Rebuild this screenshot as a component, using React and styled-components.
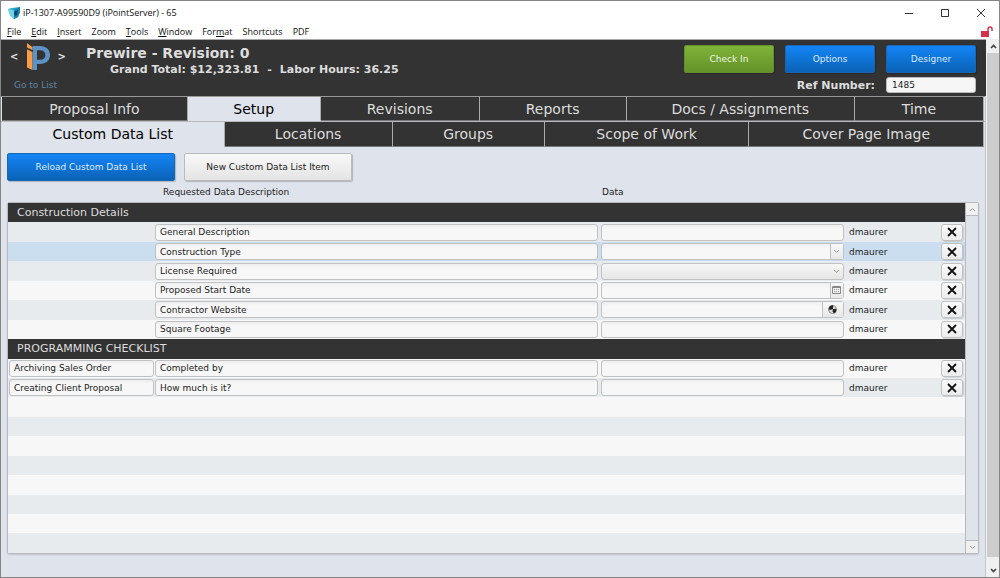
import React from 'react';
import styled, { createGlobalStyle, css } from 'styled-components';

const COLORS = {
  dark: '#333333',
  page: '#dfe3eb',
  light: '#dddddd',
  line: '#b6b9bd',
  odd: '#f7f7f7',
  even: '#e7ebee',
  active: '#cbdeef',
};

const MENUS = [
  ['', 'F', 'ile'],
  ['', 'E', 'dit'],
  ['', 'I', 'nsert'],
  ['Zoom', '', ''],
  ['', 'T', 'ools'],
  ['', 'W', 'indow'],
  ['For', 'm', 'at'],
  ['Shortcuts', '', ''],
  ['PDF', '', ''],
];

const MAIN_TABS = [
  { label: 'Proposal Info', weight: 186 },
  { label: 'Setup', weight: 133, active: true },
  { label: 'Revisions', weight: 159 },
  { label: 'Reports', weight: 147 },
  { label: 'Docs / Assignments', weight: 229 },
  { label: 'Time', weight: 129 },
];

const SUB_TABS = [
  { label: 'Custom Data List', weight: 223, active: true },
  { label: 'Locations', weight: 168 },
  { label: 'Groups', weight: 152 },
  { label: 'Scope of Work', weight: 205 },
  { label: 'Cover Page Image', weight: 235 },
];

const SECTIONS = [
  {
    title: 'Construction Details',
    rows: [
      { description: 'General Description', type: 'text' },
      { description: 'Construction Type', type: 'combo', active: true },
      { description: 'License Required', type: 'select' },
      { description: 'Proposed Start Date', type: 'date' },
      { description: 'Contractor Website', type: 'web' },
      { description: 'Square Footage', type: 'text' },
    ],
  },
  {
    title: 'PROGRAMMING CHECKLIST',
    rows: [
      { category: 'Archiving Sales Order', description: 'Completed by', type: 'text' },
      { category: 'Creating Client Proposal', description: 'How much is it?', type: 'text' },
    ],
  },
];

const EMPTY_ROWS = 8;

const AppIcon = () => (
  <svg width="12" height="12" viewBox="0 0 12 12" aria-hidden="true">
    <path d="M0 2 L4 1 L12 0 L12 5 L10 10 L6 12 L2 8 Z" fill="#25a5c6" />
    <path d="M0 2 L6 3 L6 12 L2 8 Z" fill="#6fd3e6" />
    <path d="M6 3 L12 0 L12 5 L10 10 L6 12 Z" fill="#1382ae" />
    <path d="M6 5 L10 3 L9 8 L7 9 Z" fill="#0a4468" />
  </svg>
);

const Logo = () => (
  <svg width="23" height="29" viewBox="0 0 23 29" aria-hidden="true">
    <path d="M0 1 L5.5 5.2 V8 L0 5.6 Z M0 7.2 L5.5 10 V28 L0 25.6 Z" fill="#fb9c45" />
    <path
      d="M5.5 4 H13 C19 4 23 7.6 23 13 C23 18.4 19 22 13 22 H10 V28 H5.5 V10 L6.5 8.5 L5.5 8 Z M10 8.3 V17.8 H13 C16.4 17.8 18.4 16 18.4 13 C18.4 10 16.4 8.3 13 8.3 Z"
      fill="#5c92c4"
      fillRule="evenodd"
    />
  </svg>
);

const Chevron = ({ up, bold }) => (
  <svg width="7" height="5" viewBox="0 0 7 5" aria-hidden="true">
    <path
      d={up ? 'M1 4 L3.5 1.5 L6 4' : 'M1 1 L3.5 3.5 L6 1'}
      fill="none"
      stroke="currentColor"
      strokeWidth={bold ? 1.7 : 1}
    />
  </svg>
);

const Cross = () => (
  <svg width="10" height="10" viewBox="0 0 10 10" aria-hidden="true">
    <path d="M1 1 L9 9 M9 1 L1 9" fill="none" stroke="#111" strokeWidth="1.8" />
  </svg>
);

const Calendar = () => (
  <svg width="9" height="8" viewBox="0 0 9 8" aria-hidden="true">
    <path d="M0.5 0.5 H8.5 V7.5 H0.5 Z M0 1.5 H9" fill="none" stroke="#888" />
    <path d="M2 3.5 H7.5 M2 5.5 H7.5" fill="none" stroke="#999" strokeDasharray="1 1" />
  </svg>
);

const Globe = () => (
  <svg width="9" height="9" viewBox="0 0 9 9" aria-hidden="true">
    <circle cx="4.5" cy="4.5" r="4" fill="#ddd" stroke="#888" />
    <path d="M2 1 L5 0 L5 4 L2 5 L0.5 4 Z M5 4 L8.5 4 Q8.5 7 6 8.5 L4.5 6.5 Z" fill="#222" />
  </svg>
);

const Lock = () => (
  <svg width="12" height="11" viewBox="0 0 12 11" aria-hidden="true">
    <path d="M0 5 H8 V11 H0 Z" fill="#d6304a" />
    <path d="M7 5 V3 Q7 1 9 1 Q11 1 11 3 V5" fill="none" stroke="#d6304a" strokeWidth="1.5" />
  </svg>
);

const DataCell = ({ row }) => {
  const label = `${row.description} data`;
  if (row.type === 'select') {
    return (
      <SelectWrap>
        <Select aria-label={label} />
        <Chevron />
      </SelectWrap>
    );
  }
  return (
    <FieldGroup>
      <Field aria-label={label} />
      {row.type === 'combo' && <Addon aria-label="Show values"><Chevron /></Addon>}
      {row.type === 'date' && <Addon aria-label="Pick a date"><Calendar /></Addon>}
      {row.type === 'web' && <Addon $wide aria-label="Open website"><Globe /></Addon>}
    </FieldGroup>
  );
};

const Section = ({ section }) => (
  <>
    <HeadingRow>
      <th colSpan="5" scope="colgroup">{section.title}</th>
    </HeadingRow>
    {section.rows.map((row) => (
      <Row key={row.description} $active={row.active}>
        <td>
          {row.category && (
            <FieldGroup $first>
              <Field aria-label="Category" defaultValue={row.category} />
            </FieldGroup>
          )}
        </td>
        <td>
          <FieldGroup>
            <Field aria-label="Requested data description" defaultValue={row.description} />
          </FieldGroup>
        </td>
        <td><DataCell row={row} /></td>
        <UserCell>dmaurer</UserCell>
        <td><DeleteButton aria-label="Delete item"><Cross /></DeleteButton></td>
      </Row>
    ))}
  </>
);

export default function App() {
  return (
    <Window>
      <GlobalStyle />
      <TitleBar>
        <AppIcon />
        <Title>iP-1307-A99590D9 (iPointServer) - 65</Title>
        <WindowButton aria-label="Minimize">
          <svg width="10" height="10"><path d="M1 5.5 H9" stroke="#333" /></svg>
        </WindowButton>
        <WindowButton aria-label="Maximize">
          <svg width="10" height="10"><path d="M1.5 1.5 H8.5 V8.5 H1.5 Z" fill="none" stroke="#333" /></svg>
        </WindowButton>
        <WindowButton aria-label="Close">
          <svg width="10" height="10"><path d="M1 1 L9 9 M9 1 L1 9" stroke="#333" /></svg>
        </WindowButton>
      </TitleBar>
      <MenuBar>
        {MENUS.map(([before, key, after]) => (
          <MenuItem key={before + key + after}>{before}<u>{key}</u>{after}</MenuItem>
        ))}
        <LockSlot><Lock /></LockSlot>
      </MenuBar>
      <Body>
        <Page>
          <Header>
            <Brand>
              <BrandRow>
                <Arrow aria-label="Previous">&lt;</Arrow>
                <Logo />
                <Arrow aria-label="Next">&gt;</Arrow>
              </BrandRow>
              <ListLink href="#list">Go to List</ListLink>
            </Brand>
            <Summary>
              <Heading>Prewire - Revision: 0</Heading>
              <Totals>
                <span>Grand Total: $12,323.81</span>
                <span>-</span>
                <span>Labor Hours: 36.25</span>
              </Totals>
            </Summary>
            <Actions>
              <ActionRow>
                <Button $tone="green">Check In</Button>
                <Button $tone="blue">Options</Button>
                <Button $tone="blue">Designer</Button>
              </ActionRow>
              <RefRow>
                <label htmlFor="ref">Ref Number:</label>
                <RefInput id="ref" defaultValue="1485" />
              </RefRow>
            </Actions>
          </Header>
          <Content>
            <Tabs>
              {MAIN_TABS.map((tab) => (
                <Tab key={tab.label} $weight={tab.weight} $active={tab.active}>{tab.label}</Tab>
              ))}
            </Tabs>
            <Tabs $sub>
              {SUB_TABS.map((tab) => (
                <Tab key={tab.label} $weight={tab.weight} $active={tab.active}>{tab.label}</Tab>
              ))}
            </Tabs>
            <Toolbar>
              <Button $tone="blue" $wide>Reload Custom Data List</Button>
              <Button $wide>New Custom Data List Item</Button>
            </Toolbar>
            <ColumnLabels>
              <span>Requested Data Description</span>
              <span>Data</span>
            </ColumnLabels>
            <Portal>
              <TableArea>
                <Table>
                  <colgroup>
                    <Col $width={146} />
                    <col />
                    <Col $width={246} />
                    <Col $width={95} />
                    <Col $width={24} />
                  </colgroup>
                  <tbody>
                    {SECTIONS.map((section) => <Section key={section.title} section={section} />)}
                    {Array.from({ length: EMPTY_ROWS }, (_, i) => (
                      <Row key={i}><td colSpan="5" /></Row>
                    ))}
                  </tbody>
                </Table>
              </TableArea>
              <PortalScroll>
                <ScrollButton aria-label="Scroll up"><Chevron up /></ScrollButton>
                <ScrollButton aria-label="Scroll down"><Chevron /></ScrollButton>
              </PortalScroll>
            </Portal>
          </Content>
        </Page>
        <WindowScroll>
          <WindowScrollButton aria-label="Page up"><Chevron up bold /></WindowScrollButton>
          <Thumb />
          <WindowScrollButton $tall aria-label="Page down"><Chevron bold /></WindowScrollButton>
        </WindowScroll>
      </Body>
    </Window>
  );
}

const GlobalStyle = createGlobalStyle`
  * {
    box-sizing: border-box;
  }
  body {
    margin: 0;
    font-family: Verdana, 'DejaVu Sans', sans-serif;
    font-size: 9px;
    color: #222;
  }
  button, input, select {
    margin: 0;
    padding: 0;
    border: 0;
    font: inherit;
    color: inherit;
    background: none;
  }
  svg {
    display: block;
    flex: none;
  }
`;

const center = css`
  display: flex;
  align-items: center;
  justify-content: center;
`;

const Window = styled.div`
  display: flex;
  flex-direction: column;
  height: 100vh;
  min-height: 480px;
  border: 1px solid #858585;
  background: #fff;
`;

const TitleBar = styled.div`
  display: flex;
  align-items: center;
  height: 23px;
  padding-left: 7px;
  font-family: 'Segoe UI', 'Open Sans', sans-serif;
  font-size: 9px;
  color: #111;
`;

const Title = styled.span`
  flex: 1;
  padding-left: 3px;
`;

const WindowButton = styled.button`
  ${center}
  width: 36px;
  height: 23px;
`;

const MenuBar = styled.nav`
  display: flex;
  align-items: center;
  gap: 10px;
  height: 15px;
  padding-left: 6px;
  font-family: 'Segoe UI', 'Open Sans', sans-serif;
  font-size: 9px;
  color: #111;
`;

const MenuItem = styled.button`
  line-height: 14px;
`;

const LockSlot = styled.span`
  margin-left: auto;
  padding-right: 6px;
`;

const Body = styled.div`
  display: flex;
  flex: 1;
  min-height: 0;
`;

const Page = styled.main`
  display: flex;
  flex-direction: column;
  flex: 1;
  min-width: 0;
`;

const Content = styled.div`
  display: flex;
  flex-direction: column;
  flex: 1;
  min-height: 0;
  border-right: 1px solid #c3c7cc;
  background: ${COLORS.page};
`;

const Header = styled.header`
  display: flex;
  height: 57px;
  padding-right: 10px;
  border-top: 1px solid #a8a8a8;
  background: ${COLORS.dark};
  color: ${COLORS.light};
`;

const Brand = styled.div`
  width: 68px;
  padding-top: 2px;
`;

const BrandRow = styled.div`
  ${center}
  gap: 8px;
  padding-left: 6px;
`;

const Arrow = styled.button`
  font-size: 10px;
  font-weight: bold;
`;

const ListLink = styled.a`
  display: block;
  margin-top: 8px;
  padding-left: 1px;
  line-height: 12px;
  text-align: center;
  text-decoration: none;
  color: #5f83a3;
`;

const Summary = styled.div`
  flex: 1;
  padding: 4px 0 0 17px;
`;

const Heading = styled.h1`
  margin: 0;
  font-size: 14px;
  line-height: 18px;
`;

const Totals = styled.div`
  display: flex;
  gap: 8px;
  padding-left: 24px;
  font-size: 11px;
  font-weight: bold;
  line-height: 16px;
`;

const Actions = styled.div`
  display: flex;
  flex-direction: column;
  align-items: flex-end;
  gap: 4px;
  padding-top: 5px;
`;

const ActionRow = styled.div`
  display: flex;
  gap: 11px;
`;

const Button = styled.button`
  width: ${({ $wide }) => ($wide ? 168 : 90)}px;
  height: 28px;
  border: 1px solid #bbb;
  border-radius: 2px;
  background: linear-gradient(#f8f8f8, #e4e4e4);
  color: #222;
  box-shadow: 1px 1px 1px #0003;
  ${({ $tone }) => $tone === 'blue' && css`
    border-color: #1767b3;
    background: linear-gradient(#1485f7, #0a62b5);
    color: #dcebfa;
  `}
  ${({ $tone }) => $tone === 'green' && css`
    border-color: #668f30;
    background: linear-gradient(#7fb338, #64922a);
    color: #eef5e4;
  `}
`;

const RefRow = styled.div`
  display: flex;
  align-items: center;
  gap: 11px;
  font-size: 11px;
  font-weight: bold;
`;

const RefInput = styled.input`
  width: 90px;
  height: 16px;
  padding: 0 5px;
  border: 1px solid #bbb;
  border-radius: 3px;
  background: #f6f6f6;
  color: #222;
  font-size: 9px;
  font-weight: normal;
`;

const Tabs = styled.nav`
  display: flex;
  height: 25px;
  padding: 0 1px;
  border-top: 1px solid #999;
  ${({ $sub }) => $sub && css`
    height: 26px;
    border-top-color: #b8babd;
  `}
`;

const Tab = styled.button`
  flex: ${({ $weight }) => $weight} 1 0;
  border-right: 1px solid #aaa;
  border-bottom: 1px solid #777;
  background: ${COLORS.dark};
  color: ${COLORS.light};
  font-size: 14px;
  ${({ $active }) => $active && css`
    border-bottom-color: ${COLORS.page};
    background: ${COLORS.page};
    color: #000;
  `}
`;

const Toolbar = styled.div`
  display: flex;
  gap: 9px;
  padding: 6px 6px 4px;
`;

const ColumnLabels = styled.div`
  display: grid;
  grid-template-columns: 1fr 383px;
  margin-bottom: 3px;
  padding-left: 162px;
  line-height: 14px;
`;

const Portal = styled.section`
  display: flex;
  flex: 1;
  min-height: 0;
  margin: 0 6px 23px 6px;
  border: 1px solid ${COLORS.line};
  border-radius: 2px;
  box-shadow: 0 1px 2px #0002;
`;

const TableArea = styled.div`
  flex: 1;
  min-width: 0;
`;

const Table = styled.table`
  width: 100%;
  height: 100%;
  table-layout: fixed;
  border-collapse: collapse;
  td {
    padding: 0;
  }
`;

const Col = styled.col`
  width: ${({ $width }) => $width}px;
`;

const HeadingRow = styled.tr`
  height: 19px;
  background: ${COLORS.dark};
  color: ${COLORS.light};
  th {
    padding: 0 9px;
    font-size: 11px;
    font-weight: normal;
    line-height: 14px;
    text-align: left;
  }
`;

const Row = styled.tr`
  height: 19px;
  background: ${COLORS.odd};
  &:nth-child(even) {
    background: ${COLORS.even};
  }
  ${({ $active }) => $active && css`
    && {
      background: ${COLORS.active};
    }
  `}
`;

const FieldGroup = styled.div`
  display: flex;
  height: 17px;
  margin-right: 2px;
  margin-left: 1px;
  border: 1px solid #bfc1c3;
  border-radius: 3px;
  background: linear-gradient(#eeeeee, #f7f7f7 4px);
  ${({ $first }) => $first && css`
    margin-right: 0;
  `}
`;

const Field = styled.input`
  flex: 1;
  min-width: 0;
  padding: 0 4px;
`;

const Addon = styled.button`
  ${center}
  width: ${({ $wide }) => ($wide ? 21 : 13)}px;
  border-left: 1px solid #bfc1c3;
  background: linear-gradient(#f8f8f8, #e8e8e8);
  color: #999;
`;

const SelectWrap = styled.div`
  display: flex;
  align-items: center;
  height: 17px;
  margin-right: 2px;
  margin-left: 1px;
  padding-right: 3px;
  border: 1px solid #bfc1c3;
  border-radius: 3px;
  background: linear-gradient(#f6f6f6, #e6e6e6);
  color: #999;
`;

const Select = styled.select`
  flex: 1;
  appearance: none;
`;

const UserCell = styled.td`
  && {
    padding-left: 3px;
  }
`;

const DeleteButton = styled.button`
  ${center}
  width: 22px;
  height: 17px;
  border: 1px solid #bfc1c3;
  border-radius: 3px;
  background: linear-gradient(#fafafa, #ececec);
  box-shadow: 1px 1px 1px #0002;
`;

const PortalScroll = styled.div`
  display: flex;
  flex-direction: column;
  justify-content: space-between;
  width: 13px;
  border-left: 1px solid ${COLORS.line};
`;

const ScrollButton = styled.button`
  ${center}
  height: 13px;
  border: solid ${COLORS.line};
  border-width: 0 0 1px;
  background: #f0f0f0;
  color: #999;
  &:last-child {
    border-width: 1px 0 0;
  }
`;

const WindowScroll = styled.div`
  display: flex;
  flex-direction: column;
  width: 13px;
  padding-left: 1px;
  background: #f0f0f0;
`;

const WindowScrollButton = styled.button`
  ${center}
  height: ${({ $tall }) => ($tall ? 20 : 14)}px;
  padding-top: ${({ $tall }) => ($tall ? 6 : 0)}px;
  color: #444;
`;

const Thumb = styled.div`
  flex: 1;
  background: #cdcdcd;
`;
